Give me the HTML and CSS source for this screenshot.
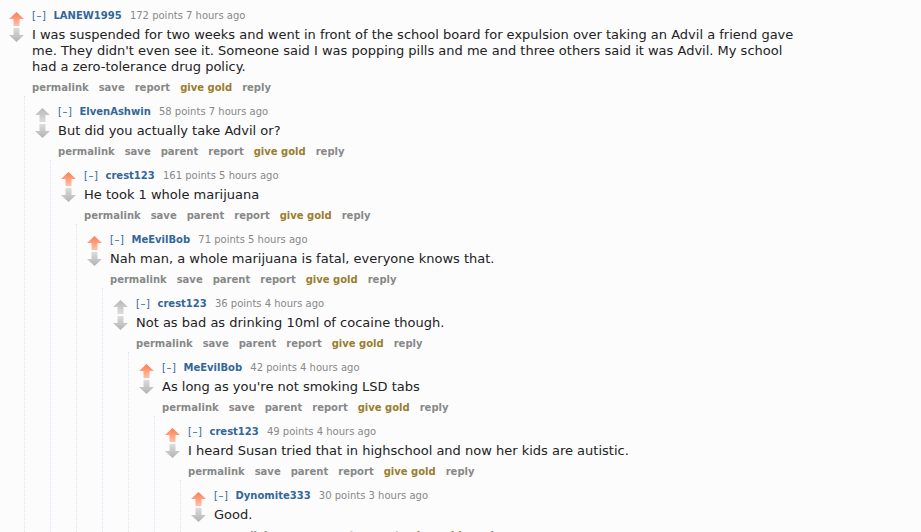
FILE: index.html
```html
<!DOCTYPE html>
<html>
<head>
<meta charset="utf-8">
<link rel="stylesheet" href="styles.css">
</head>
<body>
<svg width="0" height="0" class="defs">
  <defs>
    <linearGradient id="gUpOn" x1="0" y1="0" x2="0" y2="1">
      <stop offset="0" stop-color="#ff7b4f"/>
      <stop offset="1" stop-color="#ffc2ab"/>
    </linearGradient>
    <linearGradient id="gUpOff" x1="0" y1="0" x2="0" y2="1">
      <stop offset="0" stop-color="#b8b8b8"/>
      <stop offset="1" stop-color="#dcdcdc"/>
    </linearGradient>
    <linearGradient id="gDown" x1="0" y1="0" x2="0" y2="1">
      <stop offset="0" stop-color="#dcdcdc"/>
      <stop offset="1" stop-color="#b2b2b2"/>
    </linearGradient>
  </defs>
</svg>
<div class="comments">
  <div class="comment">
    <div class="row">
      <div class="midcol">
        <svg class="arrow" width="15" height="14" viewBox="0 0 15 14"><polygon points="7.5,0 15,7 10.5,7 10.5,14 4.5,14 4.5,7 0,7" fill="url(#gUpOn)"/></svg>
        <svg class="arrow" width="15" height="14" viewBox="0 0 15 14"><polygon points="7.5,14 15,7 10.5,7 10.5,0 4.5,0 4.5,7 0,7" fill="url(#gDown)"/></svg>
      </div>
      <div class="entry">
        <p class="tagline"><span class="expand">[–]</span> <a class="author">LANEW1995</a> <span class="score">172 points 7 hours ago</span></p>
        <div class="md"><p>I was suspended for two weeks and went in front of the school board for expulsion over taking an Advil a friend gave me. They didn't even see it. Someone said I was popping pills and me and three others said it was Advil. My school had a zero-tolerance drug policy.</p></div>
        <ul class="buttons"><li>permalink</li><li>save</li><li>report</li><li class="gold">give gold</li><li>reply</li></ul>
      </div>
    </div>
    <div class="child">
      <div class="comment">
        <div class="row">
          <div class="midcol">
            <svg class="arrow" width="15" height="14" viewBox="0 0 15 14"><polygon points="7.5,0 15,7 10.5,7 10.5,14 4.5,14 4.5,7 0,7" fill="url(#gUpOff)"/></svg>
            <svg class="arrow" width="15" height="14" viewBox="0 0 15 14"><polygon points="7.5,14 15,7 10.5,7 10.5,0 4.5,0 4.5,7 0,7" fill="url(#gDown)"/></svg>
          </div>
          <div class="entry">
            <p class="tagline"><span class="expand">[–]</span> <a class="author">ElvenAshwin</a> <span class="score">58 points 7 hours ago</span></p>
            <div class="md"><p>But did you actually take Advil or?</p></div>
            <ul class="buttons"><li>permalink</li><li>save</li><li>parent</li><li>report</li><li class="gold">give gold</li><li>reply</li></ul>
          </div>
        </div>
        <div class="child">
          <div class="comment">
            <div class="row">
              <div class="midcol">
                <svg class="arrow" width="15" height="14" viewBox="0 0 15 14"><polygon points="7.5,0 15,7 10.5,7 10.5,14 4.5,14 4.5,7 0,7" fill="url(#gUpOn)"/></svg>
                <svg class="arrow" width="15" height="14" viewBox="0 0 15 14"><polygon points="7.5,14 15,7 10.5,7 10.5,0 4.5,0 4.5,7 0,7" fill="url(#gDown)"/></svg>
              </div>
              <div class="entry">
                <p class="tagline"><span class="expand">[–]</span> <a class="author">crest123</a> <span class="score">161 points 5 hours ago</span></p>
                <div class="md"><p>He took 1 whole marijuana</p></div>
                <ul class="buttons"><li>permalink</li><li>save</li><li>parent</li><li>report</li><li class="gold">give gold</li><li>reply</li></ul>
              </div>
            </div>
            <div class="child">
              <div class="comment">
                <div class="row">
                  <div class="midcol">
                    <svg class="arrow" width="15" height="14" viewBox="0 0 15 14"><polygon points="7.5,0 15,7 10.5,7 10.5,14 4.5,14 4.5,7 0,7" fill="url(#gUpOn)"/></svg>
                    <svg class="arrow" width="15" height="14" viewBox="0 0 15 14"><polygon points="7.5,14 15,7 10.5,7 10.5,0 4.5,0 4.5,7 0,7" fill="url(#gDown)"/></svg>
                  </div>
                  <div class="entry">
                    <p class="tagline"><span class="expand">[–]</span> <a class="author">MeEvilBob</a> <span class="score">71 points 5 hours ago</span></p>
                    <div class="md"><p>Nah man, a whole marijuana is fatal, everyone knows that.</p></div>
                    <ul class="buttons"><li>permalink</li><li>save</li><li>parent</li><li>report</li><li class="gold">give gold</li><li>reply</li></ul>
                  </div>
                </div>
                <div class="child">
                  <div class="comment">
                    <div class="row">
                      <div class="midcol">
                        <svg class="arrow" width="15" height="14" viewBox="0 0 15 14"><polygon points="7.5,0 15,7 10.5,7 10.5,14 4.5,14 4.5,7 0,7" fill="url(#gUpOff)"/></svg>
                        <svg class="arrow" width="15" height="14" viewBox="0 0 15 14"><polygon points="7.5,14 15,7 10.5,7 10.5,0 4.5,0 4.5,7 0,7" fill="url(#gDown)"/></svg>
                      </div>
                      <div class="entry">
                        <p class="tagline"><span class="expand">[–]</span> <a class="author">crest123</a> <span class="score">36 points 4 hours ago</span></p>
                        <div class="md"><p>Not as bad as drinking 10ml of cocaine though.</p></div>
                        <ul class="buttons"><li>permalink</li><li>save</li><li>parent</li><li>report</li><li class="gold">give gold</li><li>reply</li></ul>
                      </div>
                    </div>
                    <div class="child">
                      <div class="comment">
                        <div class="row">
                          <div class="midcol">
                            <svg class="arrow" width="15" height="14" viewBox="0 0 15 14"><polygon points="7.5,0 15,7 10.5,7 10.5,14 4.5,14 4.5,7 0,7" fill="url(#gUpOn)"/></svg>
                            <svg class="arrow" width="15" height="14" viewBox="0 0 15 14"><polygon points="7.5,14 15,7 10.5,7 10.5,0 4.5,0 4.5,7 0,7" fill="url(#gDown)"/></svg>
                          </div>
                          <div class="entry">
                            <p class="tagline"><span class="expand">[–]</span> <a class="author">MeEvilBob</a> <span class="score">42 points 4 hours ago</span></p>
                            <div class="md"><p>As long as you're not smoking LSD tabs</p></div>
                            <ul class="buttons"><li>permalink</li><li>save</li><li>parent</li><li>report</li><li class="gold">give gold</li><li>reply</li></ul>
                          </div>
                        </div>
                        <div class="child">
                          <div class="comment">
                            <div class="row">
                              <div class="midcol">
                                <svg class="arrow" width="15" height="14" viewBox="0 0 15 14"><polygon points="7.5,0 15,7 10.5,7 10.5,14 4.5,14 4.5,7 0,7" fill="url(#gUpOn)"/></svg>
                                <svg class="arrow" width="15" height="14" viewBox="0 0 15 14"><polygon points="7.5,14 15,7 10.5,7 10.5,0 4.5,0 4.5,7 0,7" fill="url(#gDown)"/></svg>
                              </div>
                              <div class="entry">
                                <p class="tagline"><span class="expand">[–]</span> <a class="author">crest123</a> <span class="score">49 points 4 hours ago</span></p>
                                <div class="md"><p>I heard Susan tried that in highschool and now her kids are autistic.</p></div>
                                <ul class="buttons"><li>permalink</li><li>save</li><li>parent</li><li>report</li><li class="gold">give gold</li><li>reply</li></ul>
                              </div>
                            </div>
                            <div class="child">
                              <div class="comment">
                                <div class="row">
                                  <div class="midcol">
                                    <svg class="arrow" width="15" height="14" viewBox="0 0 15 14"><polygon points="7.5,0 15,7 10.5,7 10.5,14 4.5,14 4.5,7 0,7" fill="url(#gUpOn)"/></svg>
                                    <svg class="arrow" width="15" height="14" viewBox="0 0 15 14"><polygon points="7.5,14 15,7 10.5,7 10.5,0 4.5,0 4.5,7 0,7" fill="url(#gDown)"/></svg>
                                  </div>
                                  <div class="entry">
                                    <p class="tagline"><span class="expand">[–]</span> <a class="author">Dynomite333</a> <span class="score">30 points 3 hours ago</span></p>
                                    <div class="md"><p>Good.</p></div>
                                    <ul class="buttons"><li>permalink</li><li>save</li><li>parent</li><li>report</li><li class="gold">give gold</li><li>reply</li></ul>
                                  </div>
                                </div>
                              </div>
                            </div>
                          </div>
                        </div>
                      </div>
                    </div>
                  </div>
                </div>
              </div>
            </div>
          </div>
        </div>
      </div>
    </div>
  </div>
</div>
</body>
</html>
```

FILE: styles.css
```css
html, body {
  margin: 0;
  padding: 0;
  background: #fcfcfd;
  font-family: "DejaVu Sans", Verdana, sans-serif;
  color: #222;
  overflow: hidden;
}
.defs {
  position: absolute;
  width: 0;
  height: 0;
}
.comment {
  padding-top: 10px;
}
.row {
  display: flex;
}
.midcol {
  width: 32px;
  flex: none;
  display: flex;
  flex-direction: column;
  align-items: flex-start;
  padding-top: 2px;
  padding-left: 9px;
  box-sizing: border-box;
  gap: 2px;
}
.arrow {
  display: block;
}
.entry {
  flex: 1;
  min-width: 0;
}
.tagline {
  margin: 0;
  font-size: 10px;
  line-height: 12px;
  color: #888;
  white-space: nowrap;
}
.expand {
  color: #369;
  margin-right: 4px;
  letter-spacing: 0.5px;
}
.author {
  color: #369;
  font-weight: bold;
  margin-right: 5px;
}
.md {
  max-width: 770px;
  font-size: 13px;
  line-height: 16px;
}
.md p {
  margin: 5px 0;
}
.buttons {
  list-style: none;
  margin: 0;
  padding: 0;
  display: flex;
  gap: 10px;
  font-size: 10px;
  line-height: 16px;
  font-weight: bold;
  color: #888;
  white-space: nowrap;
}
.buttons .gold {
  color: #9a7d2e;
}
.child {
  margin-left: 24px;
  border-left: 1px dotted #e2e2f6;
  padding-left: 1px;
}
```
